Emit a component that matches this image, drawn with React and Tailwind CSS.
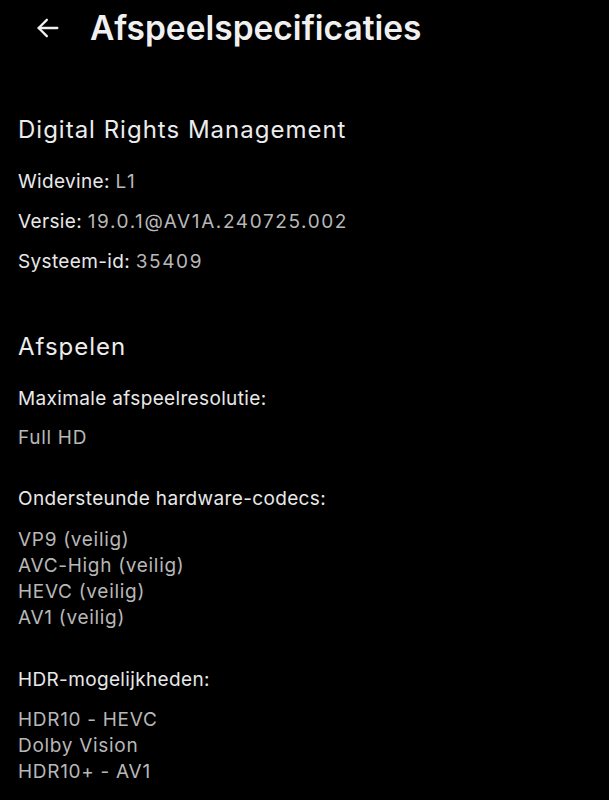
export default function App() {
  const label = "text-[19px] leading-[26px] tracking-[0.35px] text-[#e8e8e8]";
  const val = "text-[19px] leading-[26px] tracking-[0.7px] text-[#b8b8b8]";
  const num = "text-[19px] leading-[26px] tracking-[1.6px] text-[#b8b8b8]";
  const head = "text-[24px] leading-[32px] tracking-[1px] text-[#ececec]";
  return (
    <div className="w-[609px] h-[800px] bg-black overflow-hidden" style={{ fontFamily: "Inter, 'Noto Sans', sans-serif" }}>
      <div className="flex items-center h-[56px]">
        <div className="w-[90px] flex items-center pl-[34px]">
          <svg width="28" height="28" viewBox="0 0 24 24" fill="none" stroke="#f0f0f0" strokeWidth="2" strokeLinecap="round" strokeLinejoin="round">
            <path d="M20 12H4" />
            <path d="M11 5l-7 7 7 7" />
          </svg>
        </div>
        <div className="text-[33.5px] leading-[40px] font-semibold text-[#f0f0f0]">Afspeelspecificaties</div>
      </div>
      <div className="px-[18px]">
        <div className={"mt-[58px] " + head}>Digital Rights Management</div>
        <div className="mt-[23px] flex flex-col gap-[14px]">
          <div className={label}>Widevine: <span className={num}>L1</span></div>
          <div className={label}>Versie: <span className={num}>19.0.1@AV1A.240725.002</span></div>
          <div className={label}>Systeem-id: <span className={num}>35409</span></div>
        </div>
        <div className={"mt-[56px] " + head}>Afspelen</div>
        <div className={"mt-[23px] " + label}>Maximale afspeelresolutie:</div>
        <div className={"mt-[13px] " + val}>Full HD</div>
        <div className={"mt-[35px] " + label}>Ondersteunde hardware-codecs:</div>
        <div className="mt-[15px] flex flex-col">
          <div className={val}>VP9 (veilig)</div>
          <div className={val}>AVC-High (veilig)</div>
          <div className={val}>HEVC (veilig)</div>
          <div className={val}>AV1 (veilig)</div>
        </div>
        <div className={"mt-[36px] " + label}>HDR-mogelijkheden:</div>
        <div className="mt-[14px] flex flex-col">
          <div className={val}>HDR10 - HEVC</div>
          <div className={val}>Dolby Vision</div>
          <div className={val}>HDR10+ - AV1</div>
        </div>
      </div>
    </div>
  );
}
